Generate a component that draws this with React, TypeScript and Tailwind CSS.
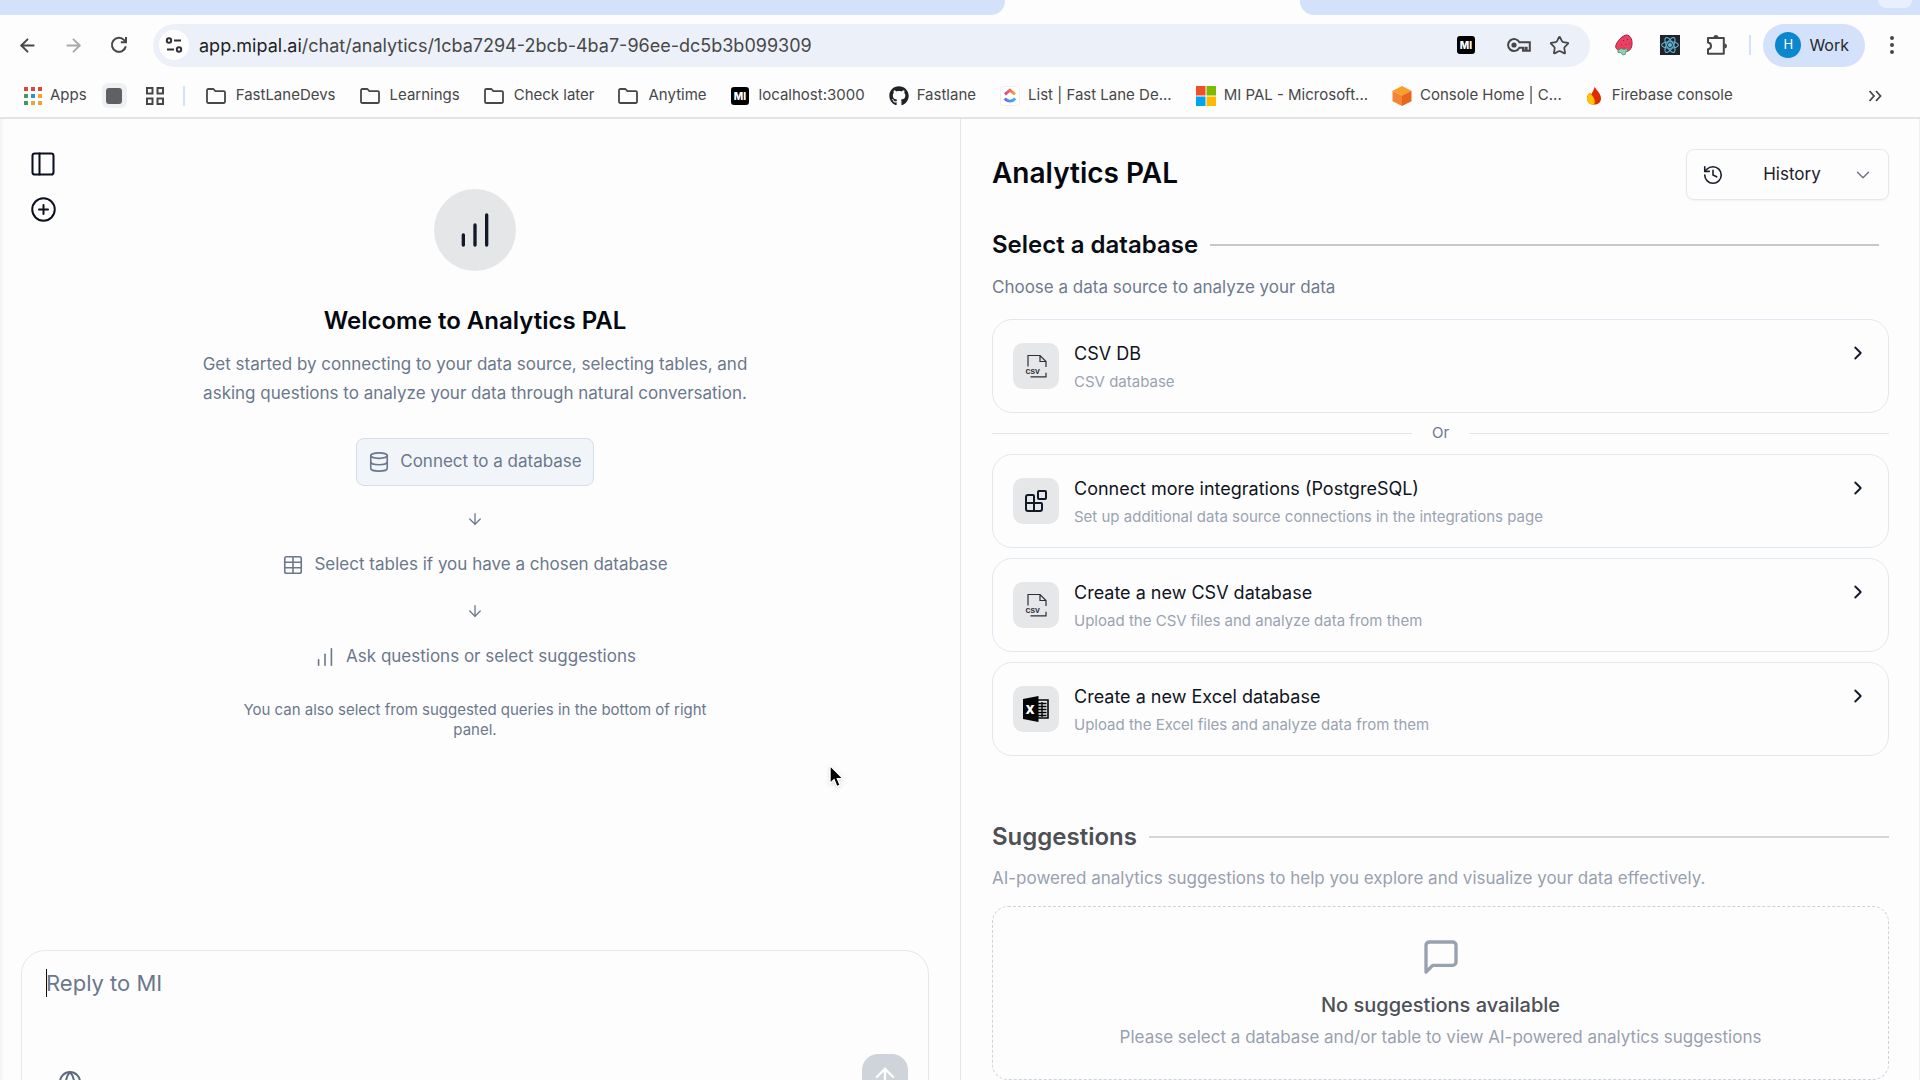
import React from "react";
import {
  ArrowDown,
  ArrowLeft,
  ArrowRight,
  ArrowUp,
  Blocks,
  ChartNoAxesColumnIncreasing,
  ChevronDown,
  ChevronRight,
  CirclePlus,
  Database,
  Globe,
  History,
  PanelLeft,
  Star,
  Table,
} from "lucide-react";
import { FaGithub } from "react-icons/fa";

/* ---------- browser chrome icons ---------- */

function ReloadIcon() {
  return (
    <svg width="20" height="20" viewBox="0 0 20 20" fill="none" stroke="#474747" strokeWidth="2">
      <path d="M16.8 11.2A7 7 0 1 1 15.2 5.2L17 7" />
      <path d="M17 2V7.2H11.8" />
    </svg>
  );
}

function TuneIcon() {
  return (
    <svg width="18" height="18" viewBox="0 0 18 18" fill="none" stroke="#2f3033" strokeWidth="2">
      <circle cx="4" cy="4.5" r="2.2" />
      <path d="M9 4.5H16M2 13.5H9" />
      <circle cx="14" cy="13.5" r="2.2" />
    </svg>
  );
}

function MiLogo() {
  return (
    <svg width="18" height="18" viewBox="0 0 18 18">
      <rect width="18" height="18" rx="3" fill="#000" />
      <text x="9" y="13" fill="#fff" textAnchor="middle" fontFamily="Inter, sans-serif" fontWeight="800" fontSize="10">
        MI
      </text>
    </svg>
  );
}

function KeyIcon() {
  return (
    <svg width="24" height="18" viewBox="0 0 24 18" fill="none" stroke="#474747" strokeWidth="2">
      <path d="M12.4 6.2A6 6 0 1 0 12.4 11.8H16V14.8H18.4V11.8H19.6V14.8H22.8V6.2Z" />
      <circle cx="7" cy="9" r="1.6" fill="#474747" />
    </svg>
  );
}

function StrawberryIcon() {
  return (
    <svg width="20" height="22" viewBox="0 0 20 22">
      <path
        d="M11.5 1.2C15 .4 17.6 3.4 18 8c.4 5-1.6 8.6-4.6 9.2-4 .8-10.6-.4-11.6-3.6C.8 10 7 2.200 11.500 1.200Z"
        fill="#ee3e62"
        stroke="#8c2b42"
        strokeWidth="1"
      />
      <path d="M4 16l3.400-1.600 2.400 1 2.800-.8 1.200 2.200-2 1-.4 2.400-2.600.8-1.800-2.200-3-.4Z" fill="#7fd8ae" stroke="#4b7a68" strokeWidth=".7" />
      <path d="M9.500 6v1M13.500 5v1M7.500 10.500v1M12 10v1M15.200 9.500v1M10 13.400v.8" stroke="#8c2b42" strokeWidth="1" />
    </svg>
  );
}

function ReactBadge() {
  return (
    <svg width="20" height="20" viewBox="0 0 20 20" fill="none" stroke="#61b7dc" strokeWidth="1.1">
      <rect width="20" height="20" fill="#20232a" stroke="none" />
      <ellipse cx="10" cy="10" rx="8.400" ry="3.300" />
      <ellipse cx="10" cy="10" rx="8.400" ry="3.300" transform="rotate(60 10 10)" />
      <ellipse cx="10" cy="10" rx="8.400" ry="3.300" transform="rotate(120 10 10)" />
      <circle cx="10" cy="10" r="1.500" fill="#61b7dc" />
    </svg>
  );
}

function PuzzleIcon() {
  return (
    <svg width="22" height="22" viewBox="0 0 22 22" fill="none" stroke="#474747" strokeWidth="2" strokeLinejoin="round">
      <path d="M2 4H17.800V19.800H2V15.200C6 14.600 6 9.200 2 8.600Z" />
      <path d="M7.400 3.400a2.500 2.500 0 0 1 5 0ZM18.400 9.400a2.500 2.500 0 0 1 0 5Z" fill="#474747" stroke="none" />
    </svg>
  );
}

function KebabIcon() {
  return (
    <svg width="6" height="20" viewBox="0 0 6 20" fill="#474747">
      <circle cx="3" cy="3" r="2" />
      <circle cx="3" cy="10" r="2" />
      <circle cx="3" cy="17" r="2" />
    </svg>
  );
}

const appDots = ["#d9493a", "#d9493a", "#d9493a", "#3f9a5f", "#2f8fd8", "#f0a23a", "#3f9a5f", "#f0a23a", "#f0a23a"];

function AppsIcon() {
  return (
    <svg width="18" height="18" viewBox="0 0 18 18">
      {appDots.map((color, i) => (
        <rect key={i} x={(i % 3) * 7} y={Math.floor(i / 3) * 7} width="4" height="4" fill={color} />
      ))}
    </svg>
  );
}

function GridIcon() {
  return (
    <svg width="18" height="18" viewBox="0 0 18 18" fill="none" stroke="#474747" strokeWidth="2">
      <rect x="1" y="1" width="5.500" height="5.500" />
      <rect x="11.500" y="1" width="5.500" height="5.500" />
      <rect x="1" y="11.500" width="5.500" height="5.500" />
      <rect x="11.500" y="11.500" width="5.500" height="5.500" />
    </svg>
  );
}

function FolderIcon() {
  return (
    <svg width="20" height="16" viewBox="0 0 20 16" fill="none" stroke="#474747" strokeWidth="1.800" strokeLinejoin="round">
      <path d="M1 2.200A1.200 1.200 0 0 1 2.200 1H7.400L9.400 3.200H17.800A1.200 1.200 0 0 1 19 4.400V13.800A1.200 1.200 0 0 1 17.800 15H2.200A1.200 1.200 0 0 1 1 13.800Z" />
    </svg>
  );
}

function ClickUpIcon() {
  return (
    <svg width="20" height="20" viewBox="0 0 20 20" fill="none" strokeWidth="2.800">
      <defs>
        <linearGradient id="cu-top" x1="0" x2="1">
          <stop offset="0" stopColor="#e8388c" />
          <stop offset="1" stopColor="#f7a531" />
        </linearGradient>
        <linearGradient id="cu-bottom" x1="0" x2="1">
          <stop offset="0" stopColor="#6b6df0" />
          <stop offset="1" stopColor="#3fb6f0" />
        </linearGradient>
      </defs>
      <rect x=".5" y=".5" width="19" height="19" rx="2" fill="#fff" stroke="#f0f0f0" strokeWidth="1" />
      <path d="M5 8.400L10 4.200L15 8.400" stroke="url(#cu-top)" />
      <path d="M4.800 12.400C7.400 16 12.600 16 15.200 12.400" stroke="url(#cu-bottom)" />
    </svg>
  );
}

function MicrosoftIcon() {
  return (
    <svg width="20" height="20" viewBox="0 0 20 20">
      <rect width="9.500" height="9.500" fill="#f25022" />
      <rect x="10.500" width="9.500" height="9.500" fill="#7fba00" />
      <rect y="10.500" width="9.500" height="9.500" fill="#00a4ef" />
      <rect x="10.500" y="10.500" width="9.500" height="9.500" fill="#ffb900" />
    </svg>
  );
}

function AwsIcon() {
  return (
    <svg width="20" height="20" viewBox="0 0 20 20">
      <path d="M10 0L19.500 4.800L10 9.600L.5 4.800Z" fill="#f9a02c" />
      <path d="M.5 4.800L10 9.600V20L.5 15.200Z" fill="#f58536" />
      <path d="M19.500 4.800L10 9.600V20L19.500 15.200Z" fill="#e9661d" />
    </svg>
  );
}

function FirebaseIcon() {
  return (
    <svg width="16" height="20" viewBox="0 0 16 20">
      <path d="M8.600 1C11 4.600 15 7.800 15 12.400C15 16.200 12 18.600 8 18.600C4 18.600 1 16.200 1 12.400C1 9.800 2.400 8 4 6.800L5.200 8.400C6.400 6.400 7.800 3.800 8.600 1Z" fill="#dd2c00" />
      <path d="M3.800 7C2.200 8.400 1 10 1 12.400C1 16.200 4 18.600 7.600 18.600C9.600 16 9.400 12.600 3.800 7Z" fill="#ffc400" />
      <path d="M3.800 7C9.400 11.800 9.800 15.600 7.600 18.600C11 17.400 8.600 10 3.800 7Z" fill="#ff9100" />
    </svg>
  );
}

/* ---------- page icons ---------- */

function CsvIcon() {
  return (
    <svg width="24" height="24" viewBox="0 0 24 24" fill="none" stroke="#2b2f36" strokeWidth="1.200">
      <path d="M4 12.500V1.500H16L22 7.500V13M16 1.500V7.500H22" />
      <path d="M6.500 22.800H22V18.800" />
      <text x="1.500" y="20" fill="#2b2f36" stroke="none" fontFamily="'Liberation Mono', monospace" fontWeight="700" fontSize="8">
        CSV
      </text>
    </svg>
  );
}

function ExcelIcon() {
  return (
    <svg width="26" height="26" viewBox="0 0 26 26">
      <path d="M15 4H25V22H15" fill="none" stroke="#050505" strokeWidth="1.600" />
      <path d="M15 7.500H23.500M15 10.500H23.500M15 13.500H23.500M15 16.500H23.500M15 19.500H23.500M19 6V21" stroke="#050505" strokeWidth="1.400" />
      <path d="M0 3L15.500 0V26L0 23Z" fill="#050505" />
      <text x="7.200" y="17.500" fill="#fff" textAnchor="middle" fontFamily="'Open Sans', sans-serif" fontWeight="800" fontSize="12">
        X
      </text>
    </svg>
  );
}

function MessageIcon() {
  return (
    <svg width="40" height="40" viewBox="0 0 24 24" fill="none" stroke="#98a1b0" strokeWidth="2" strokeLinecap="round" strokeLinejoin="round">
      <path d="M21 15a2 2 0 0 1-2 2H7l-4 4V5a2 2 0 0 1 2-2h14a2 2 0 0 1 2 2z" />
    </svg>
  );
}

function PointerIcon() {
  return (
    <svg width="18" height="26" viewBox="0 0 18 26" className="drop-shadow">
      <path d="M2 1.500V19.500L6 15.800L8.800 22.600L12.200 21.200L9.400 14.600H15Z" fill="#000" stroke="#fff" strokeWidth="1.400" />
    </svg>
  );
}

/* ---------- browser chrome ---------- */

function Bookmark({ icon, label, wide }: { icon: React.ReactNode; label: string; wide?: boolean }) {
  return (
    <a href="#" className={wide ? "flex items-center gap-2.5" : "flex items-center gap-2"}>
      {icon}
      <span className="whitespace-nowrap">{label}</span>
    </a>
  );
}

function BrowserChrome() {
  return (
    <header className="flex-none border-b-2 border-[#e4e4e6] bg-[#fdfdfe] text-[#474747]">
      <div className="flex h-[15px] bg-[#fdfdfe]">
        <div className="w-[1005px] rounded-br-[14px] bg-[#d3e1fb]" />
        <div className="w-[295px]" />
        <div className="flex flex-1 justify-end rounded-bl-[14px] bg-[#d3e1fb] pr-2">
          <div className="h-2 w-[34px] rounded-b-full bg-[#e9f0fd]" />
        </div>
      </div>

      <div className="flex h-[60px] items-center pr-[25px] pl-[17px]">
        <nav className="flex items-center gap-[25px]">
          <button aria-label="Back"><ArrowLeft size={21} strokeWidth={2.2} /></button>
          <button aria-label="Forward" className="text-[#a9a9ab]"><ArrowRight size={21} strokeWidth={2.2} /></button>
          <button aria-label="Reload"><ReloadIcon /></button>
        </nav>
        <div className="ml-6 flex h-[43px] flex-1 items-center rounded-full bg-[#ecf1f9] pr-5 pl-1.5">
          <button aria-label="Site information" className="flex size-[30px] items-center justify-center rounded-full bg-white">
            <TuneIcon />
          </button>
          <div className="ml-2.5 flex-1 text-[18px]">
            <span className="text-[#1f1f1f]">app.mipal.ai</span>/chat/analytics/1cba7294-2bcb-4ba7-96ee-dc5b3b099309
          </div>
          <div className="flex items-center">
            <MiLogo />
            <button aria-label="Passwords" className="ml-8"><KeyIcon /></button>
            <button aria-label="Bookmark this page" className="ml-[18px]"><Star size={21} strokeWidth={2} strokeLinejoin="miter" /></button>
          </div>
        </div>
        <div className="ml-6 flex items-center gap-[26px]">
          <StrawberryIcon />
          <ReactBadge />
          <button aria-label="Extensions"><PuzzleIcon /></button>
        </div>
        <div className="ml-[21px] h-5 w-0.5 bg-[#d3e1fb]" />
        <button className="ml-3 flex h-[43px] items-center gap-2 rounded-full bg-[#d3e1fb] pr-4 pl-3 text-[16px] text-[#26282c]">
          <span className="flex size-[26px] items-center justify-center rounded-full bg-[#0b87cf] text-[13px] text-white">H</span>
          Work
        </button>
        <button aria-label="Menu" className="ml-6"><KebabIcon /></button>
      </div>

      <div className="flex h-[42px] items-center pr-[38px] pb-px pl-6 text-[15px]">
        <Bookmark icon={<AppsIcon />} label="Apps" />
        <span className="ml-[15px] flex h-[25px] w-[25px] items-center justify-center rounded-md bg-[#eff0f2]">
          <span className="size-4 rounded-[3px] bg-[#5f6063]" />
        </span>
        <span className="ml-[19px]"><GridIcon /></span>
        <span className="ml-[19px] h-5 w-0.5 bg-[#d3e1fb]" />
        <div className="ml-[21px] flex flex-1 items-center gap-6">
          <Bookmark wide icon={<FolderIcon />} label="FastLaneDevs" />
          <Bookmark wide icon={<FolderIcon />} label="Learnings" />
          <Bookmark wide icon={<FolderIcon />} label="Check later" />
          <Bookmark wide icon={<FolderIcon />} label="Anytime" />
          <Bookmark wide icon={<MiLogo />} label="localhost:3000" />
          <Bookmark icon={<FaGithub size={20} color="#1f2328" />} label="Fastlane" />
          <Bookmark icon={<ClickUpIcon />} label="List | Fast Lane De..." />
          <Bookmark icon={<MicrosoftIcon />} label="MI PAL - Microsoft..." />
          <Bookmark icon={<AwsIcon />} label="Console Home | C..." />
          <Bookmark wide icon={<FirebaseIcon />} label="Firebase console" />
        </div>
        <button aria-label="More bookmarks">
          <svg width="14" height="12" viewBox="0 0 14 12" fill="none" stroke="#474747" strokeWidth="1.800">
            <path d="M1.500 1L6 6L1.500 11M8 1L12.500 6L8 11" />
          </svg>
        </button>
      </div>
    </header>
  );
}

/* ---------- chat panel ---------- */

function ChatPanel() {
  return (
    <section className="relative flex w-1/2 flex-col pr-[31px] pl-[21px] shadow-[inset_5px_0_4px_-4px_rgba(0,0,0,0.07)]">
      <div className="absolute top-[31px] left-[29px] flex flex-col items-center gap-[18px] text-[#0b1020]">
        <button aria-label="Toggle sidebar"><PanelLeft size={28} strokeWidth={1.75} /></button>
        <button aria-label="New chat"><CirclePlus size={27} strokeWidth={1.75} /></button>
      </div>

      <div className="flex h-[831px] flex-none flex-col items-center pt-[70px] text-center text-[#6b788b]">
        <div className="flex size-[82px] items-center justify-center rounded-full bg-[#e5e6e8] text-[#111827]">
          <ChartNoAxesColumnIncreasing size={40} strokeWidth={2} />
        </div>
        <h2 className="mt-8 text-[24px] leading-9 font-semibold text-[#05080f]">Welcome to Analytics PAL</h2>
        <p className="mt-[11px] w-[580px] text-[17px] leading-[29px]">
          Get started by connecting to your data source, selecting tables, and asking questions to analyze your data through natural conversation.
        </p>
        <button className="mt-[30px] flex h-12 items-center gap-2.5 rounded-lg border border-[#d5dde6] bg-[#f1f5f9] px-[11px] text-[17px]">
          <Database size={22} strokeWidth={1.75} />
          Connect to a database
        </button>
        <ArrowDown size={18} strokeWidth={1.75} className="mt-6" />
        <div className="mt-6 flex h-[26px] items-center gap-2.5 text-[17px]">
          <Table size={22} strokeWidth={1.75} />
          Select tables if you have a chosen database
        </div>
        <ArrowDown size={18} strokeWidth={1.75} className="mt-6" />
        <div className="mt-6 flex h-[26px] items-center gap-2.5 text-[17px]">
          <ChartNoAxesColumnIncreasing size={22} strokeWidth={1.75} />
          Ask questions or select suggestions
        </div>
        <p className="mt-[30px] w-[490px] text-[15px] leading-5">
          You can also select from suggested queries in the bottom of right panel.
        </p>
      </div>

      <div className="absolute top-[645px] left-[828px]"><PointerIcon /></div>

      <form className="flex h-[170px] flex-none flex-col rounded-[24px] border border-[#e2e8f0] px-5 pt-4">
        <div className="flex items-center pl-1">
          <span className="-mr-px h-7 w-px bg-[#111]" />
          <textarea
            aria-label="Message"
            rows={1}
            placeholder="Reply to MI"
            className="h-8 flex-1 resize-none text-[22px] leading-8 outline-none placeholder:text-[#6b788b]"
          />
        </div>
        <div className="mt-[55px] flex items-start justify-between">
          <button type="button" aria-label="Web search" className="mt-4 ml-4 text-[#5f6b7d]"><Globe size={24} strokeWidth={2} /></button>
          <button type="submit" aria-label="Send" className="flex size-[46px] items-center justify-center rounded-[16px] bg-[#cfd4da] text-white">
            <ArrowUp size={28} strokeWidth={2} />
          </button>
        </div>
      </form>
    </section>
  );
}

/* ---------- data source panel ---------- */

function SourceCard({ icon, title, text }: { icon: React.ReactNode; title: string; text: string }) {
  return (
    <button className="flex h-[94px] w-full items-start rounded-[20px] border border-[#e2e8f0] pr-[19px] pl-5 text-left">
      <span className="mt-[23px] flex size-[46px] items-center justify-center rounded-[10px] bg-[#e6e7e9] text-[#111827]">{icon}</span>
      <span className="mt-5 ml-[15px] flex-1">
        <span className="block text-[18px] leading-7 text-[#0f1420]">{title}</span>
        <span className="block text-[15px] leading-7 text-[#9aa3b0]">{text}</span>
      </span>
      <ChevronRight size={22} strokeWidth={2} className="mt-[22px] text-[#111827]" />
    </button>
  );
}

function AnalyticsPanel() {
  return (
    <section className="flex w-1/2 flex-col border-x border-l-[#e2e6ee] border-r-[#eef0f4] pr-[30px] pl-[31px]">
      <div className="mt-[30px] flex items-center justify-between">
        <h1 className="pb-1 text-[28px] font-semibold text-[#05080f]">Analytics PAL</h1>
        <button className="flex h-[51px] w-[203px] items-center justify-between rounded-lg border border-[#e2e8f0] pr-3.5 pl-[15px] text-[17px] text-[#1a202c] shadow-xs">
          <History size={22} strokeWidth={1.75} />
          <span className="ml-2">History</span>
          <ChevronDown size={22} strokeWidth={1.5} className="text-[#6b7280]" />
        </button>
      </div>

      <div className="mt-[27px] flex items-center gap-3 pr-2.5">
        <h2 className="text-[24px] leading-9 font-semibold text-[#0a0d14]">Select a database</h2>
        <div className="h-0.5 flex-1 bg-[#c8c8ca]" />
      </div>
      <p className="mt-2.5 text-[17px] leading-7 text-[#6f7b8c]">Choose a data source to analyze your data</p>

      <div className="mt-[18px]">
        <SourceCard icon={<CsvIcon />} title="CSV DB" text="CSV database" />
      </div>
      <div className="flex h-[41px] items-center gap-5 text-[15px] text-[#6b788b]">
        <div className="h-px flex-1 bg-[#e3e5e9]" />
        Or
        <div className="h-px flex-1 bg-[#e3e5e9]" />
      </div>
      <div className="flex flex-col gap-2.5">
        <SourceCard
          icon={<Blocks size={24} strokeWidth={2} />}
          title="Connect more integrations (PostgreSQL)"
          text="Set up additional data source connections in the integrations page"
        />
        <SourceCard icon={<CsvIcon />} title="Create a new CSV database" text="Upload the CSV files and analyze data from them" />
        <SourceCard icon={<ExcelIcon />} title="Create a new Excel database" text="Upload the Excel files and analyze data from them" />
      </div>

      <div className="mt-[63px] flex items-center gap-3">
        <h2 className="text-[24px] leading-9 font-semibold text-[#4e5056]">Suggestions</h2>
        <div className="h-0.5 flex-1 bg-[#d6d6d8]" />
      </div>
      <p className="mt-[9px] text-[17px] leading-7 text-[#98a1ae]">
        AI-powered analytics suggestions to help you explore and visualize your data effectively.
      </p>
      <div className="mt-3.5 flex h-[174px] flex-none flex-col items-center rounded-[16px] border border-dashed border-[#cfd3d9] pt-[30px]">
        <MessageIcon />
        <p className="mt-3.5 text-[20px] leading-7 font-medium text-[#4e5056]">No suggestions available</p>
        <p className="mt-1 text-[17px] leading-7 text-[#98a1ae]">
          Please select a database and/or table to view AI-powered analytics suggestions
        </p>
      </div>
    </section>
  );
}

export default function App() {
  return (
    <div className="flex h-screen flex-col overflow-hidden bg-[#fdfdfe] font-[Inter,'Liberation_Sans',sans-serif]">
      <BrowserChrome />
      <main className="flex min-h-0 flex-1 overflow-hidden">
        <ChatPanel />
        <AnalyticsPanel />
      </main>
    </div>
  );
}
